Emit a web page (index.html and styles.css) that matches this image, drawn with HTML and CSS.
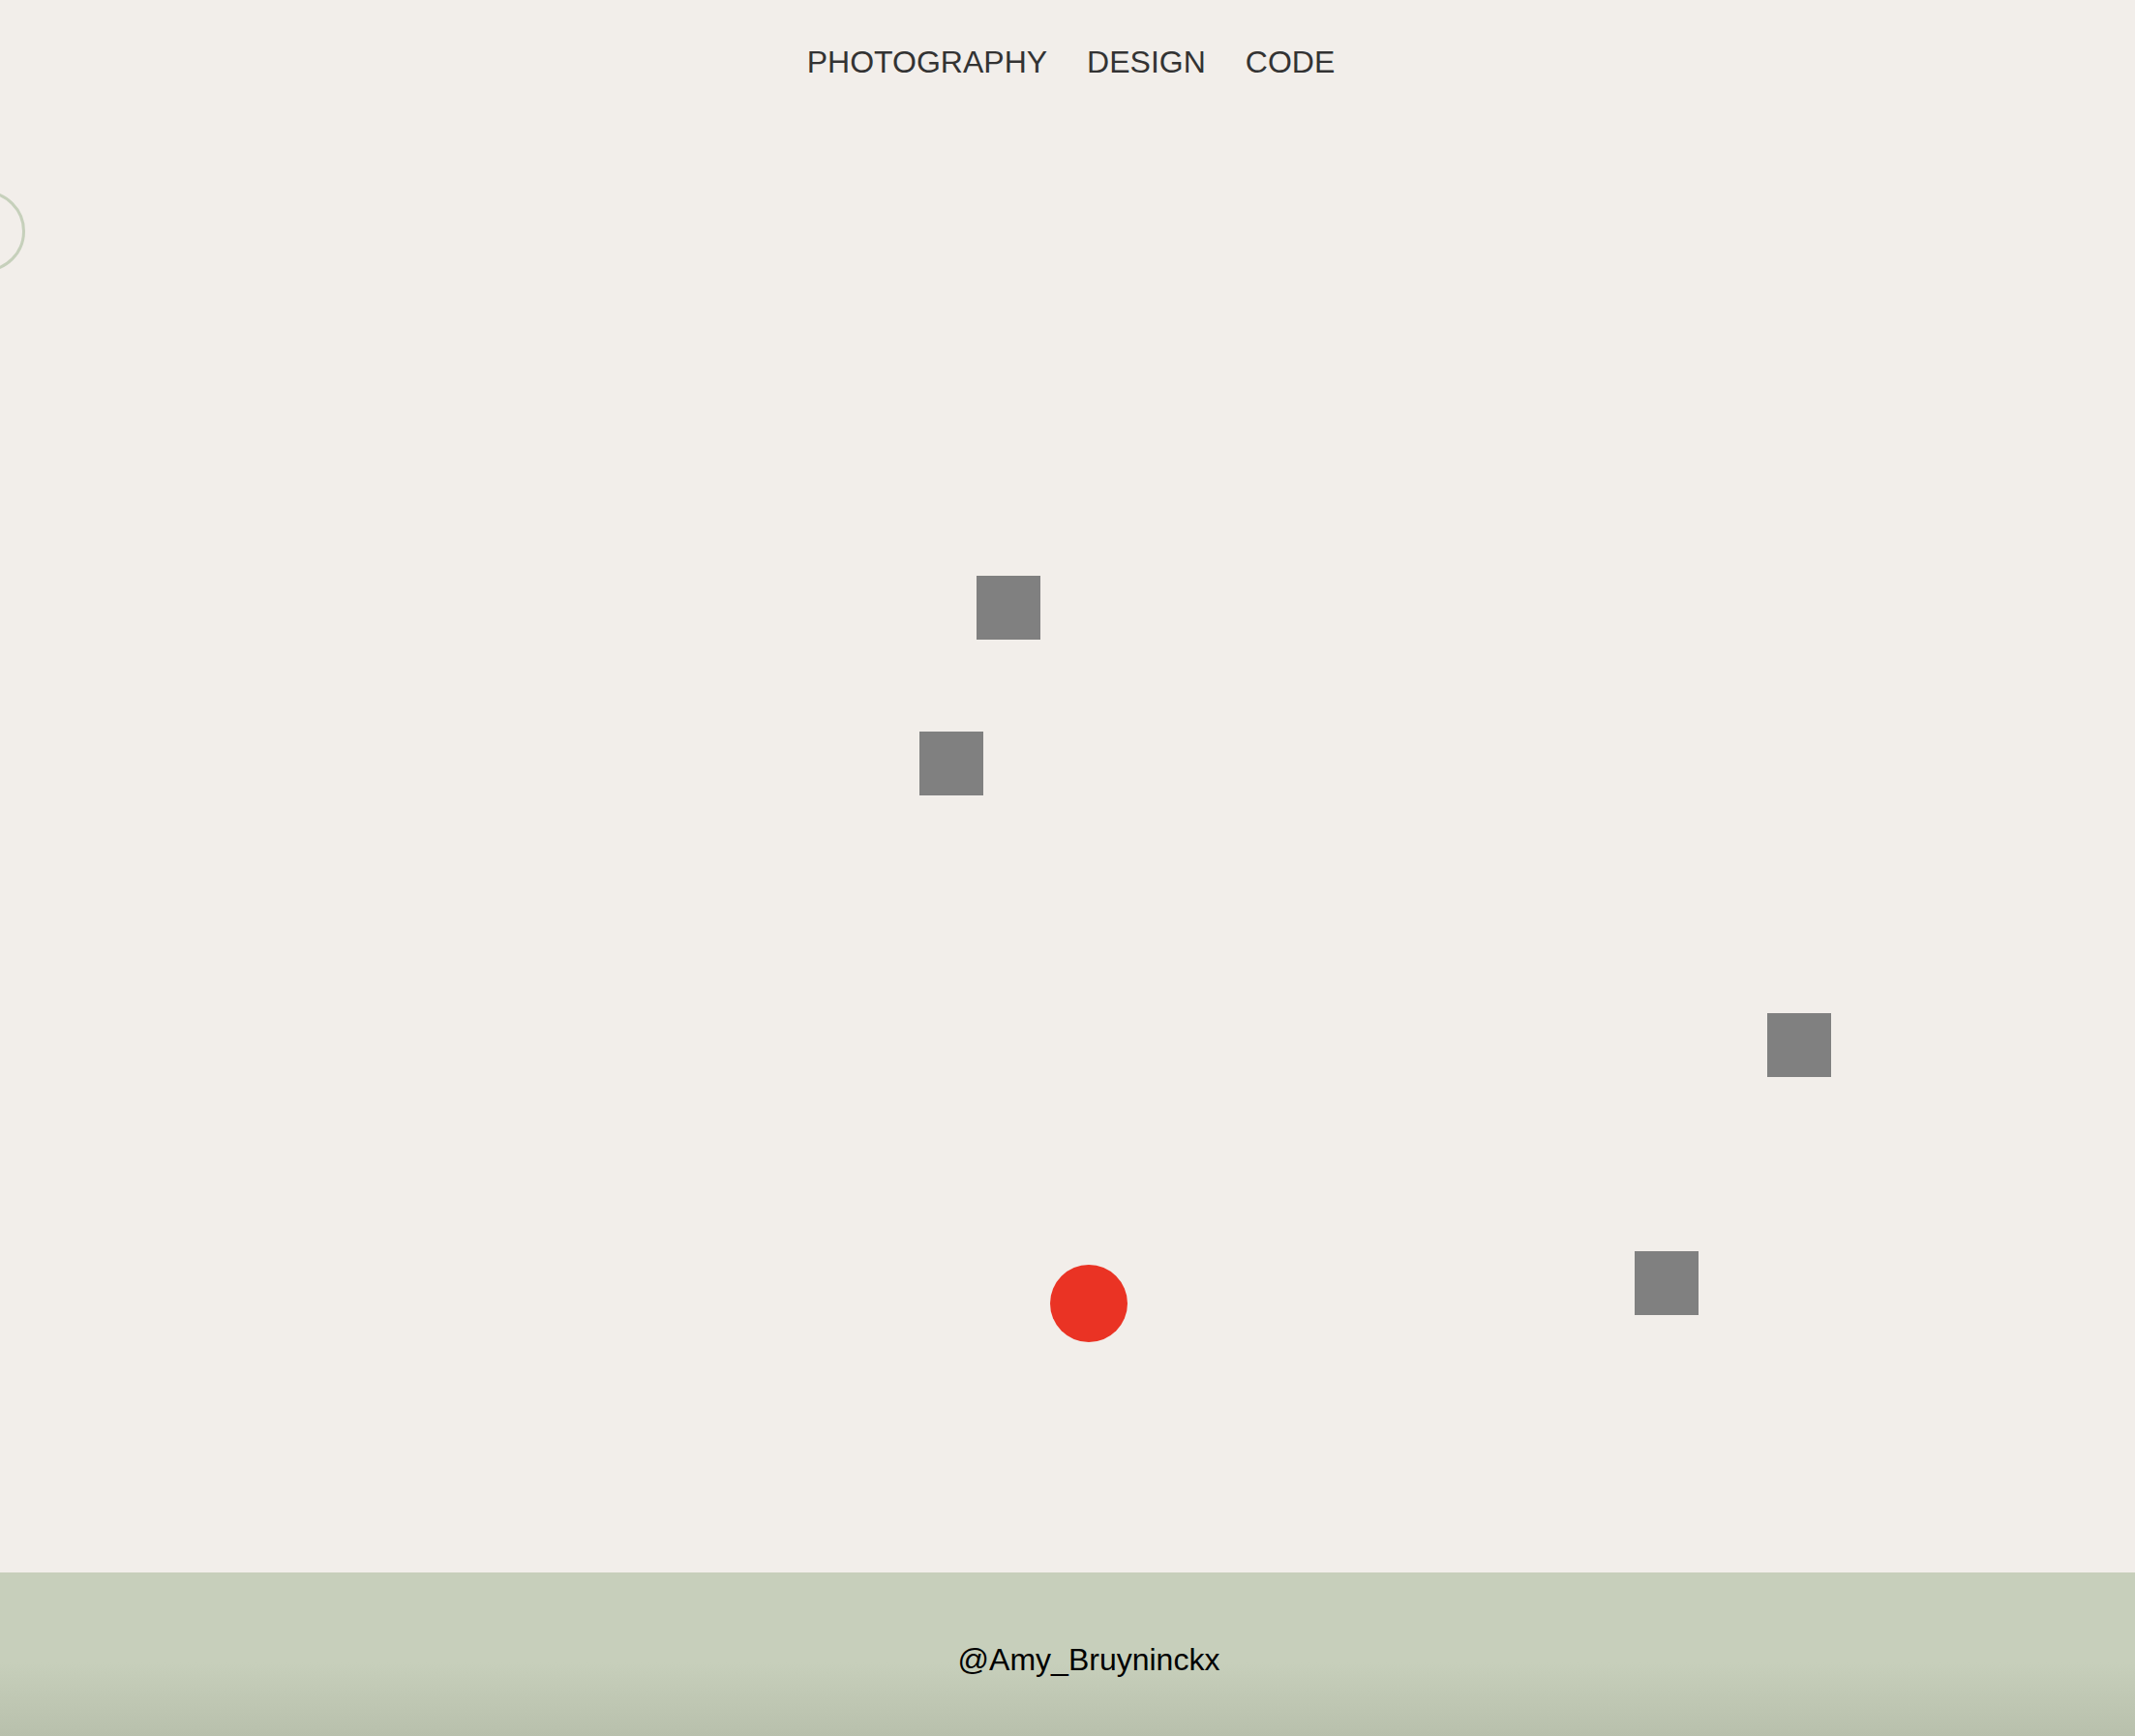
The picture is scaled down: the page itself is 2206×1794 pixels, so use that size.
FILE: index.html
```html
<!DOCTYPE html>
<html lang="en">
<head>
<meta charset="utf-8">
<title>Amy Bruyninckx</title>
<link rel="stylesheet" href="styles.css">
</head>
<body>
<header class="site-header">
  <nav class="nav">
    <a class="nav-link" href="#">PHOTOGRAPHY</a>
    <a class="nav-link" href="#">DESIGN</a>
    <a class="nav-link" href="#">CODE</a>
  </nav>
</header>
<main class="canvas">
  <div class="ring"></div>
  <div class="block block-1"></div>
  <div class="block block-2"></div>
  <div class="block block-3"></div>
  <div class="block block-4"></div>
  <div class="dot"></div>
</main>
<footer class="site-footer">
  <p class="handle">@Amy_Bruyninckx</p>
</footer>
</body>
</html>
```

FILE: styles.css
```css
html, body {
  margin: 0;
  padding: 0;
}
body {
  background: #f2eeea;
  font-family: "Liberation Sans", Arial, sans-serif;
  overflow: hidden;
}
.site-header {
  height: 130px;
  padding-top: 46px;
  box-sizing: border-box;
}
.nav {
  display: flex;
  justify-content: center;
  gap: 41px;
  padding-left: 7px;
  font-size: 32px;
  line-height: 36px;
}
.nav-link {
  color: #333333;
  text-decoration: none;
}
.canvas {
  position: relative;
  height: 1495px;
}
.ring {
  position: absolute;
  left: -58px;
  top: 67px;
  width: 78px;
  height: 78px;
  border: 3px solid #c6d0bb;
  border-radius: 50%;
}
.block {
  position: absolute;
  width: 66px;
  height: 66px;
  background: #808080;
}
.block-1 { left: 1009px; top: 465px; }
.block-2 { left: 950px; top: 626px; }
.block-3 { left: 1826px; top: 917px; }
.block-4 { left: 1689px; top: 1163px; }
.dot {
  position: absolute;
  left: 1085px;
  top: 1177px;
  width: 80px;
  height: 80px;
  border-radius: 50%;
  background: #ea3324;
}
.site-footer {
  height: 169px;
  background: linear-gradient(to bottom, #c7cfbb 0%, #c7cfbb 55%, #b8c0ac 100%);
  display: flex;
  justify-content: center;
  padding-top: 72px;
  box-sizing: border-box;
}
.handle {
  margin: 0 0 0 44px;
  font-size: 32px;
  line-height: 36px;
  color: #000000;
}
```
